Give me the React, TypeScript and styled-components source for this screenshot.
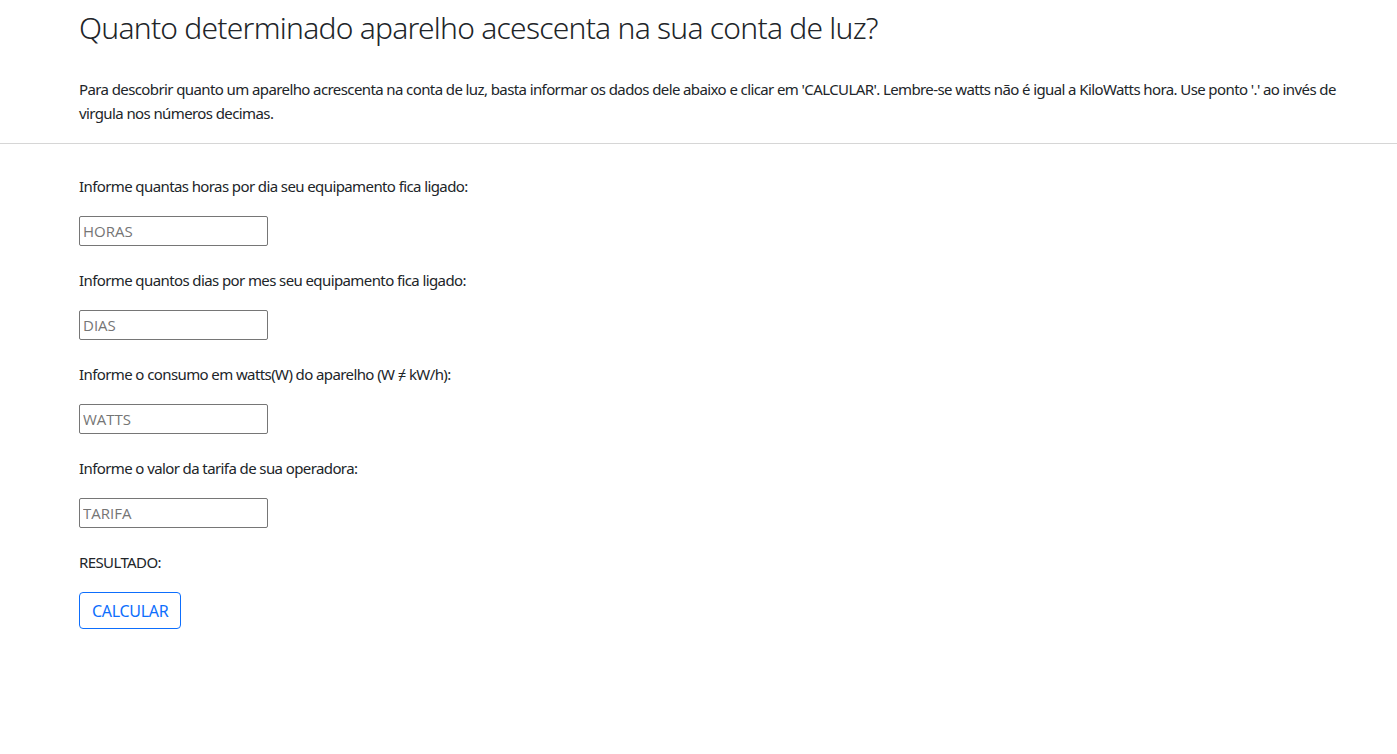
import React from "react";
import styled, { createGlobalStyle } from "styled-components";

const Global = createGlobalStyle`
  html, body { margin: 0; padding: 0; background: #fff; }
  body { font-family: "Noto Sans", "Open Sans", sans-serif; color: #212529; }
  * { box-sizing: border-box; }
`;

const Header = styled.header`
  padding: 12px 60px 18px 79px;
  border-bottom: 1px solid #d6d6d6;
`;

const Title = styled.h1`
  margin: 0 0 33px;
  font-size: 30px;
  font-weight: 300;
  line-height: 32px;
  letter-spacing: -0.75px;
`;

const Intro = styled.p`
  margin: 0;
  font-size: 15px;
  line-height: 24px;
  letter-spacing: -0.6px;
`;

const Form = styled.main`
  padding: 32px 79px;
  display: flex;
  flex-direction: column;
  align-items: flex-start;
`;

const Field = styled.div`
  display: flex;
  flex-direction: column;
  align-items: flex-start;
  gap: 20px;
  margin-bottom: 24px;
`;

const Label = styled.label`
  font-size: 15px;
  line-height: 20px;
  letter-spacing: -0.6px;
`;

const Input = styled.input`
  width: 189px;
  height: 30px;
  border: 1px solid #767676;
  border-radius: 2px;
  padding: 1px 3px;
  font-family: "Open Sans", sans-serif;
  font-size: 15px;
  color: #212529;
  &::placeholder { color: #757575; }
`;

const Result = styled.div`
  font-size: 15px;
  line-height: 20px;
  letter-spacing: -0.6px;
  margin-bottom: 20px;
`;

const Button = styled.button`
  background: #fff;
  border: 1px solid #0d6efd;
  color: #0d6efd;
  border-radius: 4px;
  height: 37px;
  padding: 0 12px;
  font-family: inherit;
  font-size: 16px;
  letter-spacing: -0.3px;
  cursor: pointer;
`;

const fields = [
  { label: "Informe quantas horas por dia seu equipamento fica ligado:", ph: "HORAS" },
  { label: "Informe quantos dias por mes seu equipamento fica ligado:", ph: "DIAS" },
  { label: "Informe o consumo em watts(W) do aparelho (W ≠ kW/h):", ph: "WATTS" },
  { label: "Informe o valor da tarifa de sua operadora:", ph: "TARIFA" },
];

export default function App() {
  return (
    <>
      <Global />
      <Header>
        <Title>Quanto determinado aparelho acescenta na sua conta de luz?</Title>
        <Intro>
          Para descobrir quanto um aparelho acrescenta na conta de luz, basta informar os dados dele abaixo e clicar em 'CALCULAR'. Lembre-se watts não é igual a KiloWatts hora. Use ponto '.' ao invés de virgula nos números decimas.
        </Intro>
      </Header>
      <Form>
        {fields.map((f) => (
          <Field key={f.ph}>
            <Label>{f.label}</Label>
            <Input type="text" placeholder={f.ph} />
          </Field>
        ))}
        <Result>RESULTADO:</Result>
        <Button>CALCULAR</Button>
      </Form>
    </>
  );
}
